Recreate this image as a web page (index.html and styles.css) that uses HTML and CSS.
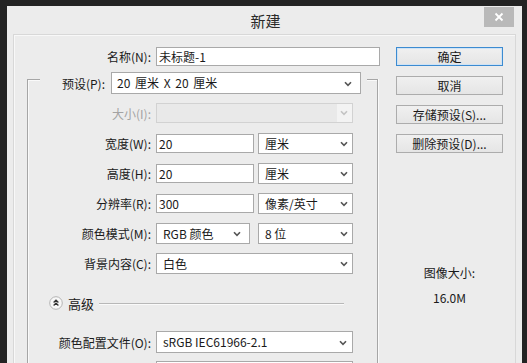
FILE: index.html
```html
<!DOCTYPE html>
<html lang="zh-CN">
<head>
    <meta charset="UTF-8">
    <title>新建</title>
    <link rel="stylesheet" href="styles.css">
</head>
<body>
    <div class="window">
        <div class="titlebar">
            <span></span>
            <div class="title">新建</div>
            <button class="close">
                <svg width="10" height="10" viewBox="0 0 10 10"><path d="M1.5 1.5 L8.5 8.5 M8.5 1.5 L1.5 8.5" stroke="#fff" stroke-width="1.8"/></svg>
            </button>
        </div>
        <div class="panel">
            <div class="main">
                <div class="row name-row">
                    <label class="label">名称(N):</label>
                    <div class="input name-input">未标题-1</div>
                </div>
                <div class="group">
                    <div class="group-head">
                        <label class="label head-label">预设(P):</label>
                        <div class="select preset">20 厘米 X 20 厘米<svg class="arrow" width="8" height="6" viewBox="0 0 8 6"><path d="M1 1.2 L4 4.4 L7 1.2" fill="none" stroke="#555" stroke-width="1.6"/></svg></div>
                    </div>
                    <div class="group-body">
                        <div class="row">
                            <label class="label disabled">大小(I):</label>
                            <div class="select full is-disabled"><span></span><span class="arrow-box"><svg class="arrow" width="8" height="6" viewBox="0 0 8 6"><path d="M1 1.2 L4 4.4 L7 1.2" fill="none" stroke="#c4c4c4" stroke-width="1.6"/></svg></span></div>
                        </div>
                        <div class="row">
                            <label class="label">宽度(W):</label>
                            <div class="input num">20</div>
                            <div class="select unit">厘米<svg class="arrow" width="8" height="6" viewBox="0 0 8 6"><path d="M1 1.2 L4 4.4 L7 1.2" fill="none" stroke="#555" stroke-width="1.6"/></svg></div>
                        </div>
                        <div class="row">
                            <label class="label">高度(H):</label>
                            <div class="input num">20</div>
                            <div class="select unit">厘米<svg class="arrow" width="8" height="6" viewBox="0 0 8 6"><path d="M1 1.2 L4 4.4 L7 1.2" fill="none" stroke="#555" stroke-width="1.6"/></svg></div>
                        </div>
                        <div class="row">
                            <label class="label">分辨率(R):</label>
                            <div class="input num">300</div>
                            <div class="select unit">像素/英寸<svg class="arrow" width="8" height="6" viewBox="0 0 8 6"><path d="M1 1.2 L4 4.4 L7 1.2" fill="none" stroke="#555" stroke-width="1.6"/></svg></div>
                        </div>
                        <div class="row">
                            <label class="label">颜色模式(M):</label>
                            <div class="select mode">RGB 颜色<svg class="arrow" width="8" height="6" viewBox="0 0 8 6"><path d="M1 1.2 L4 4.4 L7 1.2" fill="none" stroke="#555" stroke-width="1.6"/></svg></div>
                            <div class="select bits">8 位<svg class="arrow" width="8" height="6" viewBox="0 0 8 6"><path d="M1 1.2 L4 4.4 L7 1.2" fill="none" stroke="#555" stroke-width="1.6"/></svg></div>
                        </div>
                        <div class="row">
                            <label class="label">背景内容(C):</label>
                            <div class="select full">白色<svg class="arrow" width="8" height="6" viewBox="0 0 8 6"><path d="M1 1.2 L4 4.4 L7 1.2" fill="none" stroke="#555" stroke-width="1.6"/></svg></div>
                        </div>
                        <div class="advanced">
                            <svg class="toggle" width="14" height="14" viewBox="0 0 14 14">
                                <circle cx="7" cy="7" r="6.3" fill="#f7f7f7" stroke="#b4b4b4"/>
                                <path d="M4.6 6.4 L7 4.2 L9.4 6.4 M4.6 9.4 L7 7.2 L9.4 9.4" fill="none" stroke="#333" stroke-width="1.3"/>
                            </svg>
                            <span class="adv-text">高级</span>
                            <span class="adv-line"></span>
                        </div>
                        <div class="row tall">
                            <label class="label">颜色配置文件(O):</label>
                            <div class="select full">sRGB IEC61966-2.1<svg class="arrow" width="8" height="6" viewBox="0 0 8 6"><path d="M1 1.2 L4 4.4 L7 1.2" fill="none" stroke="#555" stroke-width="1.6"/></svg></div>
                        </div>
                        <!-- next row starts below the visible edge; only its top border shows -->
                        <div class="row tall last">
                            <span class="label"></span>
                            <div class="select full"></div>
                        </div>
                    </div>
                </div>
            </div>
            <div class="side">
                <button class="btn default">确定</button>
                <button class="btn">取消</button>
                <button class="btn">存储预设(S)...</button>
                <button class="btn">删除预设(D)...</button>
                <div class="size-label">图像大小:</div>
                <div class="size-value">16.0M</div>
            </div>
        </div>
    </div>
</body>
</html>
```

FILE: styles.css
```css
* {
    box-sizing: border-box;
}
body {
    margin: 0;
    height: 363px;
    overflow: hidden;
    background-color: #232323;
    font-family: "Noto Sans CJK SC", "Liberation Sans", sans-serif;
    font-size: 12px;
    color: #1a1a1a;
}
.window {
    margin: 6px 5px 0 7px;
    width: 515px;
    height: 357px;
    background-color: #ececec;
    display: flex;
    flex-direction: column;
}
.titlebar {
    height: 28px;
    display: grid;
    grid-template-columns: 1fr auto 1fr;
    align-items: center;
}
.title {
    font-size: 15px;
    color: #2a2a2a;
    margin-left: 2px;
}
.close {
    justify-self: end;
    align-self: start;
    margin: 1px 8px 0 0;
    width: 30px;
    height: 20px;
    border: none;
    padding: 0;
    background-color: #b9b9b9;
    display: flex;
    align-items: center;
    justify-content: center;
}
.panel {
    flex: 1;
    margin: 0 6px;
    border: 1px solid #d8d8d8;
    border-bottom: none;
    box-shadow: inset 1px 1px 0 #f8f8f8;
    display: flex;
    overflow: hidden;
}
.main {
    width: 368px;
    flex-shrink: 0;
}
.row {
    display: flex;
    align-items: center;
    height: 20px;
    gap: 5px;
}
.label {
    width: 123px;
    text-align: right;
    white-space: nowrap;
    flex-shrink: 0;
}
.label.disabled {
    color: #a3a3a3;
}
.name-row {
    margin-top: 12px;
    height: 19px;
}
.name-row .label {
    width: 137px;
}
.input {
    height: 19px;
    line-height: 17px;
    border: 1px solid #a9a9a9;
    background-color: #fff;
    padding-left: 2px;
    white-space: nowrap;
}
.name-input {
    width: 224px;
}
.input.num {
    width: 98px;
}
.select {
    position: relative;
    height: 21px;
    line-height: 19px;
    border: 1px solid #a9a9a9;
    background-color: #fff;
    padding-left: 6px;
    white-space: nowrap;
    flex-shrink: 0;
}
.select .arrow {
    position: absolute;
    right: 4px;
    top: 7px;
}
.select.full {
    width: 197px;
}
.select.unit,
.select.bits {
    width: 95px;
    margin-left: -1px;
}
.select.bits {
    margin-left: 3px;
}
.select.mode {
    width: 94px;
}
.select.mode .arrow {
    right: 8px;
}
.select.is-disabled {
    background-color: #e9e9e9;
    border-color: #d2d2d2;
    height: 20px;
}
.arrow-box {
    position: absolute;
    right: 0;
    top: 0;
    bottom: 0;
    width: 15px;
    background-color: #f3f3f3;
}
.arrow-box .arrow {
    right: 4px;
    top: 6px;
}
.group {
    margin: 13px 0 0 13px;
    width: 351px;
    height: 320px;
    border: 1px solid #a6a6a6;
    border-bottom: none;
    box-shadow: inset 1px 1px 0 #fafafa, 1px 0 0 #fafafa;
}
.group-head {
    margin: -8px 0 0 12px;
    width: 327px;
    height: 22px;
    background-color: #ececec;
    display: flex;
    align-items: center;
    gap: 6px;
}
.head-label {
    width: 65px;
}
.select.preset {
    width: 250px;
    height: 22px;
    line-height: 20px;
    padding-left: 5px;
    word-spacing: 2px;
}
.select.preset .arrow {
    right: 8px;
    top: 8px;
}
.group-body {
    padding-top: 9px;
    display: flex;
    flex-direction: column;
    gap: 10px;
}
.advanced {
    margin-top: 10px;
    height: 20px;
    display: flex;
    align-items: center;
    padding-left: 21px;
}
.toggle {
    flex-shrink: 0;
}
.adv-text {
    margin-left: 5px;
    font-size: 13px;
}
.adv-line {
    flex: 1;
    height: 2px;
    margin: 1px 33px 0 5px;
    border-top: 1px solid #b8b8b8;
    border-bottom: 1px solid #fafafa;
}
.row.tall {
    height: 22px;
    margin-top: 8px;
}
.row.tall .select {
    height: 22px;
    line-height: 20px;
}
.row.tall .arrow {
    top: 8px;
    right: 5px;
}
.row.last {
    margin-top: -2px;
}
.side {
    margin-left: 14px;
    width: 107px;
    padding-top: 12px;
    display: flex;
    flex-direction: column;
    gap: 10px;
}
.btn {
    height: 19px;
    padding: 0;
    font-family: inherit;
    font-size: 12px;
    color: #1a1a1a;
    line-height: 17px;
    border: 1px solid #acacac;
    background: linear-gradient(#f0f0f0, #e5e5e5);
}
.btn.default {
    border-color: #3c8bd1;
    box-shadow: inset 0 0 0 1px #cfe3f5;
}
.size-label {
    margin-top: 102px;
    text-align: center;
    line-height: 16px;
}
.size-value {
    margin-top: -1px;
    text-align: center;
    line-height: 16px;
}
```
